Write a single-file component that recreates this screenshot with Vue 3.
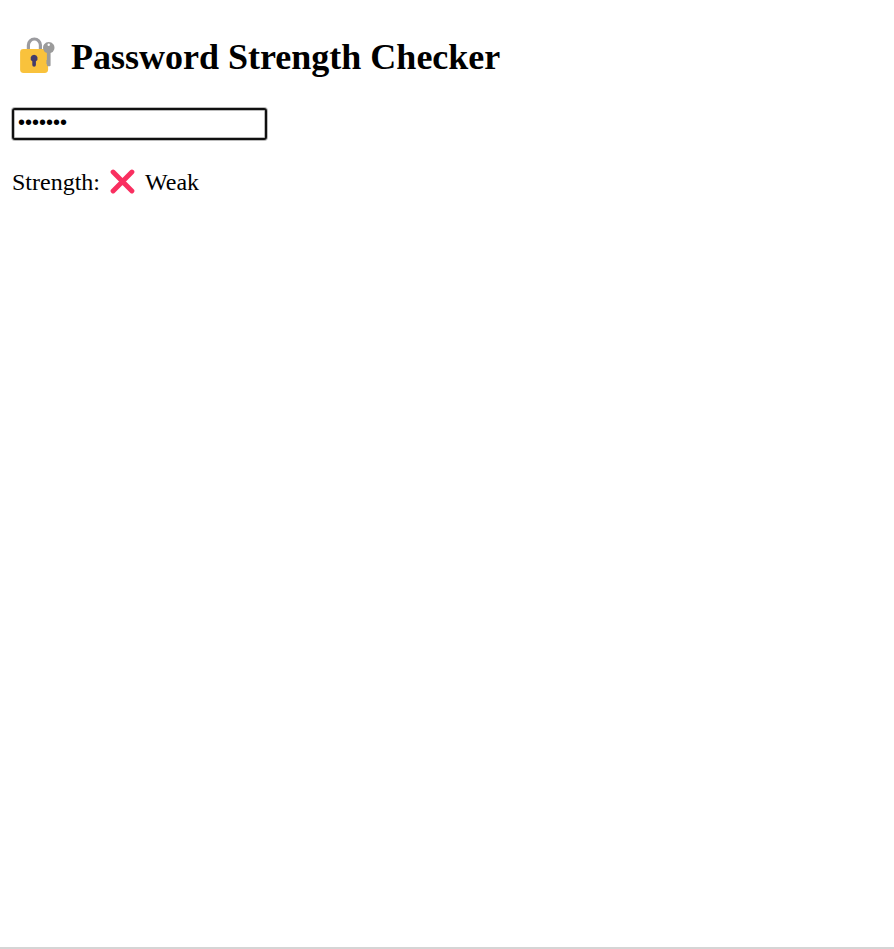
<script setup>
import { computed, ref } from 'vue'

const password = ref('abcdefg')
const strength = computed(() => (password.value.length < 8 ? 'Weak' : 'Strong'))
</script>

<template>
  <main class="page">
    <h2 class="title">
      <svg class="lock" viewBox="0 0 36 38" aria-hidden="true">
        <path d="M8.4 15V8a6 6 0 0 1 12 0v7" fill="none" stroke="#9b9b9f" stroke-width="3.2" />
        <rect x="0.1" y="12" width="28" height="24" rx="3.4" fill="#f9c23c" />
        <path d="M26.9 16.1a5.7 5.7 0 1 1 3.7 0V28.3a1 1 0 0 1-1 1h-1.4a1.4 1.4 0 0 1-1.3-1.4v-1l-.9-.9.9-1-.9-1 .9-.9z" fill="#9b9b9b" />
        <circle cx="28.7" cy="7.7" r="1.2" fill="#fff" />
        <path d="M14.1 17.8a3.5 3.5 0 0 1 1.8 6.5v3.6a1.8 1.8 0 0 1-3.6 0v-3.6a3.5 3.5 0 0 1 1.8-6.5z" fill="#433b6b" />
      </svg>
      <span>Password Strength Checker</span>
    </h2>
    <input v-model="password" class="field" type="password" aria-label="Password" />
    <p class="result">
      <span>Strength:</span>
      <svg class="cross" viewBox="0 0 25 25" aria-hidden="true">
        <path d="M3.1 3.1l18.8 18.8M21.9 3.1L3.1 21.9" fill="none" stroke="#f92f60" stroke-width="4.9" stroke-linecap="round" />
      </svg>
      <span>{{ strength }}</span>
    </p>
  </main>
</template>

<style>
body {
  margin: 0;
  background: #fff;
}
</style>

<style scoped>
.page {
  box-sizing: border-box;
  height: 949px;
  padding: 36px 12px 0;
  border-bottom: 2px solid #d5d5d5;
  font-family: "Liberation Serif", "Times New Roman", serif;
  font-size: 24px;
  color: #000;
}

.title {
  display: flex;
  margin: 0;
  padding-left: 8px;
  font-size: 36px;
  font-weight: 700;
  line-height: 42px;
}

.lock {
  width: 36px;
  height: 38px;
  margin: 1px 15px 0 0;
}

.field {
  display: block;
  box-sizing: border-box;
  width: 255px;
  height: 32px;
  margin: 30px 0 0;
  padding: 0 4px 3px;
  border: 2px solid #101010;
  border-radius: 3px;
  outline: none;
  box-shadow: 0 0 0 1px #bbb, inset 0 0 0 1px #bbb;
  background: #fff;
  font-family: "Liberation Sans", Arial, sans-serif;
  font-size: 20px;
  color: #000;
}

.result {
  display: flex;
  margin: 28px 0 0;
  line-height: 28px;
}

.cross {
  width: 25px;
  height: 25px;
  margin: 1px 10px 0;
}
</style>
